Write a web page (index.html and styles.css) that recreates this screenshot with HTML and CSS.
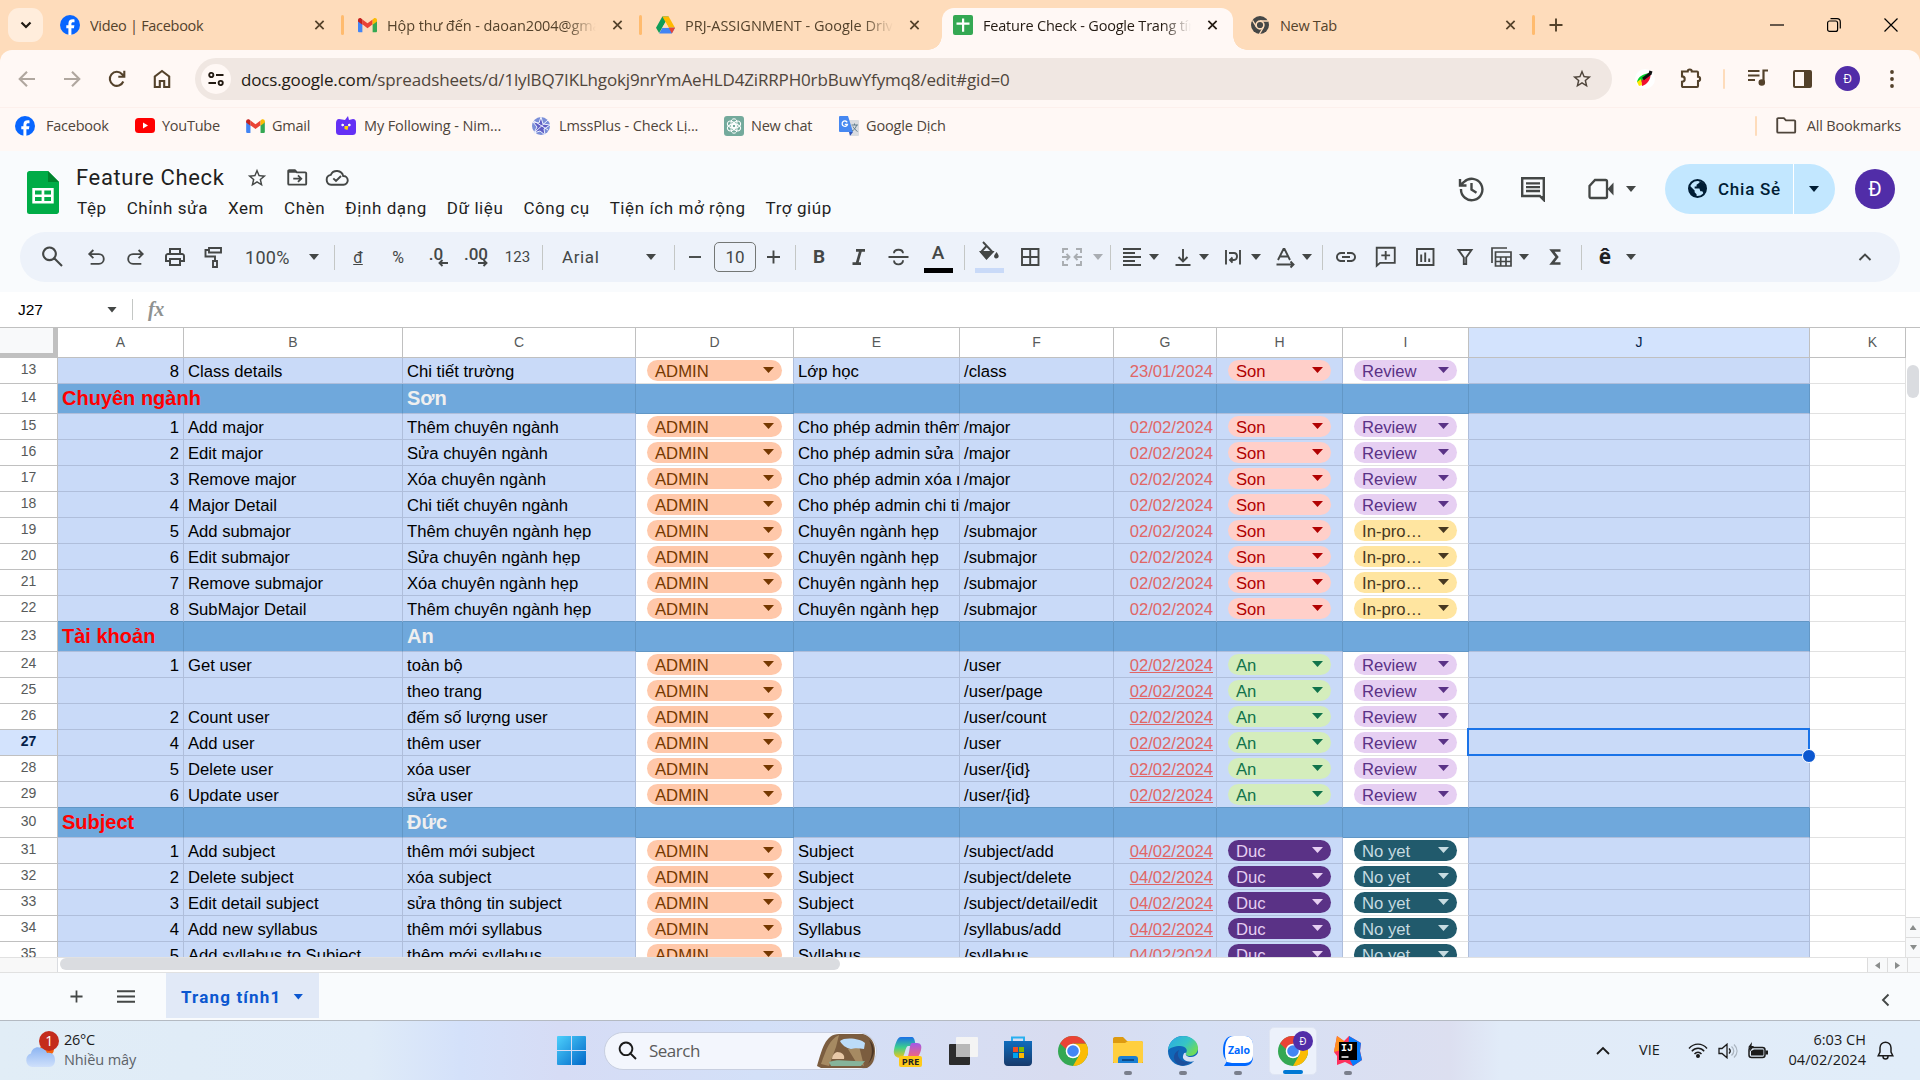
FILE: index.html
```html
<!DOCTYPE html>
<html lang="vi">
<head>
<meta charset="utf-8">
<title>Feature Check - Google Trang tính</title>
<link rel="stylesheet" href="styles.css">
</head>
<body>
<svg class="sprite" aria-hidden="true">
  <symbol id="x" viewBox="0 0 12 12"><path d="M1.500 1.500l9 9M10.500 1.500l-9 9" fill="none" stroke="currentColor" stroke-width="1.900"/></symbol>
  <symbol id="plus" viewBox="0 0 14 14"><path d="M7 0.500v13M.5 7h13" fill="none" stroke="currentColor" stroke-width="1.900"/></symbol>
  <symbol id="fb" viewBox="0 0 20 20"><circle cx="10" cy="10" r="10" fill="#0866ff"/><path d="M8.400 20v-6.700H6.300v-3h2.100V9c0-3.300 1.500-4.700 4.500-4.700.6 0 1.200.1 1.600.2v2.700h-1.300c-1.300 0-1.800.6-1.800 1.900v1.200h3l-.5 3h-2.500V20z" fill="#fff"/></symbol>
  <symbol id="gmail" viewBox="0 0 20 15"><path d="M0 2.500V14c0 .6.4 1 1 1h3.600V6.500z" fill="#4285f4"/><path d="M20 2.500V14c0 .6-.4 1-1 1h-3.600V6.500z" fill="#34a853"/><path d="M4.600 1.600v5.200l5.400 4 5.400-4V1.600L10 5.700z" fill="#ea4335"/><path d="M0 2.300v1.500l4.600 3.400V1.600L3.400.6C2 -.4 0 .5 0 2.300z" fill="#c5221f"/><path d="M20 2.300v1.500l-4.600 3.400V1.600l1.200-1C18 -.4 20 .5 20 2.300z" fill="#fbbc04"/></symbol>
  <symbol id="drive" viewBox="0 0 20 18"><path d="M6.700 0h6.600L3.300 17.500 0 12z" fill="#0f9d58"/><path d="M6.700 0h6.600L20 12h-6.600z" fill="#ffba00"/><path d="M6.700 12H20l-3.300 6H3.300z" fill="#4285f4"/><path d="M13.400 12H20l-3.300 6z" fill="#ea4335"/><path d="M10 6l3.400 6H6.600z" fill="#fedcbb"/></symbol>
  <symbol id="star" viewBox="0 0 24 24"><path fill="currentColor" d="M22 9.240l-7.190-.62L12 2 9.190 8.630 2 9.240l5.460 4.730L5.820 21 12 17.270 18.180 21l-1.630-7.030L22 9.240zM12 15.400l-3.760 2.270 1-4.280-3.320-2.880 4.380-.38L12 6.100l1.710 4.040 4.380.38-3.320 2.880 1 4.280L12 15.400z"/></symbol>
  <symbol id="chrome" viewBox="0 0 30 30"><circle cx="15" cy="15" r="15" fill="#34a853"/><path d="M15 7.500h13A15 15 0 0 1 15 30l6.500-11.300z" fill="#fbbc04"/><path d="M2 7.500l6.500 11.300L15 15z" fill="#34a853"/><path d="M2 7.500A15 15 0 0 1 28 7.500H15L8 13z" fill="#ea4335"/><circle cx="15" cy="15" r="7.300" fill="#fff"/><circle cx="15" cy="15" r="5.800" fill="#4285f4"/></symbol>
  <symbol id="fold" viewBox="0 0 22 18"><path d="M2.200 1.200h6l2.200 2.400h8.800c.6 0 1 .4 1 1v11c0 .6-.4 1-1 1h-17c-.6 0-1-.4-1-1V2.200c0-.6.400-1 1-1z" fill="none" stroke="currentColor" stroke-width="2"/></symbol>
</svg>

<header class="tabstrip">
  <button class="tab-search"><svg width="12" height="8" viewBox="0 0 12 8"><path d="M1.500 1.500L6 6l4.500-4.500" fill="none" stroke="#201a12" stroke-width="2.200"/></svg></button>
  <div class="tab"><svg class="fav"><use href="#fb"/></svg><span class="tab-title">Video | Facebook</span><svg class="close"><use href="#x"/></svg></div>
  <div class="tab"><svg class="fav gm"><use href="#gmail"/></svg><span class="tab-title fade mail">Hộp thư đến - daoan2004@gmail.com</span><svg class="close"><use href="#x"/></svg></div>
  <div class="tab last"><svg class="fav gm"><use href="#drive"/></svg><span class="tab-title fade drv">PRJ-ASSIGNMENT - Google Drive</span><svg class="close"><use href="#x"/></svg></div>
  <div class="tab active"><svg class="fav" viewBox="0 0 20 20"><rect width="20" height="20" rx="2" fill="#34a853"/><path d="M9 3.500h2.200v4h5.300v2.200h-5.300v7H9v-7H3.500V7.500H9z" fill="#fff"/></svg><span class="tab-title fade feat">Feature Check - Google Trang tính</span><svg class="close"><use href="#x"/></svg></div>
  <div class="tab new"><svg class="fav" viewBox="0 0 20 20"><circle cx="10" cy="10" r="9" fill="#454746"/><circle cx="10" cy="10" r="3.900" fill="#454746" stroke="#fedcbb" stroke-width="1.600"/><path d="M10 6h8M6.500 12L2.600 5.500M13.500 12l-4 7" stroke="#fedcbb" stroke-width="1.400"/></svg><span class="tab-title">New Tab</span><svg class="close"><use href="#x"/></svg></div>
  <svg class="new-tab"><use href="#plus"/></svg>
  <div class="window-buttons">
    <svg width="14" height="14" viewBox="0 0 14 14"><path d="M0 7h14" stroke="#000" stroke-width="1.200"/></svg>
    <svg width="14" height="14" viewBox="0 0 14 14"><rect x=".6" y="3" width="10" height="10.400" rx="2" fill="none" stroke="#000" stroke-width="1.200"/><path d="M3.500.7H10a3.300 3.300 0 0 1 3.300 3.300v6.500" fill="none" stroke="#000" stroke-width="1.200"/></svg>
    <svg width="14" height="14" viewBox="0 0 14 14"><path d="M.5.5l13 13M13.500.5l-13 13" stroke="#000" stroke-width="1.200"/></svg>
  </div>
</header>

<nav class="navbar">
  <svg class="nav dim" viewBox="0 0 20 20"><path d="M18 10H3M10 2.700L2.700 10l7.300 7.300" /></svg>
  <svg class="nav dim" viewBox="0 0 20 20"><path d="M2 10h15M10 2.700l7.300 7.300-7.300 7.300"/></svg>
  <svg class="nav" viewBox="0 0 20 20"><path d="M16.300 12.500a7 7 0 1 1-1.200-7.300l1.800 1.800M17.300 1.800v6h-6"/></svg>
  <svg class="nav" viewBox="0 0 20 20"><path d="M2.800 18V7.500L10 2l7.200 5.500V18h-5v-6H7.800v6z"/></svg>
  <div class="omnibox">
    <span class="site"><svg width="16" height="14" viewBox="0 0 16 14" fill="none" stroke="#231a12" stroke-width="1.900"><circle cx="3.300" cy="3" r="2.100"/><path d="M8 3h7.500M.5 11H8"/><circle cx="12.700" cy="11" r="2.100"/></svg></span>
    <span class="url"><b>docs.google.com</b>/spreadsheets/d/1lylBQ7IKLhgokj9nrYmAeHLD4ZiRRPH0rbBuwYfymq8/edit#gid=0</span>
    <svg class="bookmark-star"><use href="#star"/></svg>
  </div>
  <div class="extensions">
    <svg class="e1" width="20" height="20" viewBox="0 0 20 20"><circle cx="10" cy="10" r="10" fill="#fff"/><path d="M2 13C3 7 9 5 14 4L9 13z" fill="#00d02a"/><path d="M15 4c2 5-3 12-8 13L6 12z" fill="#f01030"/><path d="M2 13l4-3 1 6-3 1z" fill="#ffe600"/><path d="M8 10l8-6M14 3l3 1" stroke="#111" stroke-width="3"/></svg>
    <svg class="e2" width="22" height="22" viewBox="0 0 22 22"><path d="M2 4.500h5.700a2 2 0 0 1 4.100 0H17c.6 0 1 .4 1 1v4.300a2.100 2.100 0 0 1 0 4.200v5c0 .6-.4 1-1 1H3c-.6 0-1-.4-1-1v-4.200a2.500 2.500 0 0 0 0-5.400z" fill="none" stroke="#54422b" stroke-width="2.100"/></svg>
    <i class="divider"></i>
    <svg class="e3" width="20" height="18" viewBox="0 0 20 18" fill="none" stroke="#54422b" stroke-width="2.200"><path d="M0 2h11.500M0 6.500h11.500M0 11h7M15.500 13V1.500H20"/><circle cx="13.800" cy="13.500" r="2.200" fill="#54422b"/></svg>
    <svg class="e4" width="19" height="18" viewBox="0 0 19 18"><rect x="1" y="1" width="17" height="16" rx="1" fill="none" stroke="#54422b" stroke-width="2"/><path d="M11 1h7v16h-7z" fill="#54422b"/></svg>
    <span class="avatar small">Đ</span>
    <svg class="e5" width="4" height="18" viewBox="0 0 4 18" fill="#54422b"><circle cx="2" cy="2" r="1.900"/><circle cx="2" cy="9" r="1.900"/><circle cx="2" cy="16" r="1.900"/></svg>
  </div>
</nav>

<nav class="bookmarks">
  <a class="bm bm-fb"><svg width="20" height="20"><use href="#fb"/></svg>Facebook</a>
  <a class="bm bm-yt"><svg width="20" height="15" viewBox="0 0 20 15"><rect width="20" height="15" rx="3.500" fill="#f00"/><path d="M8 4.500l5 3-5 3z" fill="#fff"/></svg>YouTube</a>
  <a class="bm bm-gm"><svg width="19" height="14"><use href="#gmail"/></svg>Gmail</a>
  <a class="bm bm-nimo"><svg width="20" height="19" viewBox="0 0 20 19"><path d="M3 3l6 1 3-4 1 4 4-1c2 0 3 1 3 4v8c0 3-1 4-4 4H4c-3 0-4-1-4-4V7c0-2 1-4 3-4z" fill="#6430f5"/><path d="M6 8l2 1-2 1zM14 8l-2 1 2 1z" stroke="#fff" fill="#fff"/><path d="M8.500 10h4l-1 4-3-1z" fill="#ffd500"/></svg>My Following - Nim...</a>
  <a class="bm bm-lms"><svg width="20" height="20" viewBox="0 0 20 20"><circle cx="10" cy="10" r="9" fill="#7b8fd8"/><path d="M10 1l2 7 7 1-6 4 1 6-5-4-6 2 3-6-4-5 6 1z" fill="#5f5fc4"/><path d="M10 1l2 7 7 1-6 4 1 6-5-4-6 2 3-6-4-5 6 1zM3 5l14 9M17 4L4 16" fill="none" stroke="#eef3ff" stroke-width="1"/></svg>LmssPlus - Check Lị...</a>
  <a class="bm bm-gpt"><svg width="20" height="20" viewBox="0 0 20 20"><rect width="20" height="20" rx="3" fill="#74aa9c"/><g fill="none" stroke="#fff" stroke-width="1"><ellipse cx="10" cy="7.300" rx="3" ry="4.500"/><ellipse cx="10" cy="7.300" rx="3" ry="4.500" transform="rotate(60 10 10)"/><ellipse cx="10" cy="7.300" rx="3" ry="4.500" transform="rotate(120 10 10)"/><ellipse cx="10" cy="7.300" rx="3" ry="4.500" transform="rotate(180 10 10)"/><ellipse cx="10" cy="7.300" rx="3" ry="4.500" transform="rotate(240 10 10)"/><ellipse cx="10" cy="7.300" rx="3" ry="4.500" transform="rotate(300 10 10)"/></g></svg>New chat</a>
  <a class="bm bm-tr"><svg width="20" height="20" viewBox="0 0 20 20"><path d="M8 4h11a1 1 0 0 1 1 1v14a1 1 0 0 1-1 1h-7z" fill="#dadce0"/><path d="M1 0h8l5 16H1a1 1 0 0 1-1-1V1a1 1 0 0 1 1-1z" fill="#4688f1"/><path d="M10 16h4l-3 4z" fill="#3053b5"/><path d="M12.500 9H19M15.500 7.500V9M17.500 9c-.5 3-2.500 5-4.500 6M14 10.500c1 2 2.500 3.500 4.500 5" stroke="#607d8b" fill="none"/><path d="M8.200 6.300A2.700 2.700 0 1 0 8.500 8.300H5.800" stroke="#fff" stroke-width="1.300" fill="none"/></svg>Google Dịch</a>
  <i class="divider"></i>
  <a class="bm bm-all"><svg width="21" height="17"><use href="#fold"/></svg>All Bookmarks</a>
</nav>

<section class="docs-head">
  <svg class="logo" width="32" height="43" viewBox="0 0 32 43"><path d="M2.500 0H21l11 11v29.500c0 1.400-1.100 2.500-2.500 2.500h-27A2.500 2.500 0 0 1 0 40.500v-38C0 1.100 1.100 0 2.500 0z" fill="#00ac47"/><path d="M21 0l11 11H21z" fill="#00832d"/><path d="M5.300 17h21.400v15.500H5.300zm2.700 2.500v4h6.600v-4zm9.300 0v4H24v-4zM8 26v4h6.600v-4zm9.300 0v4H24v-4z" fill="#fff" fill-rule="evenodd"/></svg>
  <div class="doc-info">
    <div class="doc-title"><h1>Feature Check</h1>
      <svg class="t1" width="22" height="22"><use href="#star"/></svg>
      <svg class="t2" width="21" height="17" viewBox="0 0 22 18"><use href="#fold" width="22" height="18"/><path d="M1 1h8l2 3H1z" fill="#444746"/><path d="M6.500 10.200h8M11.500 6.700l3.500 3.500-3.500 3.500" fill="none" stroke="#444746" stroke-width="1.900"/></svg>
      <svg class="t3" width="24" height="17" viewBox="0 0 24 17"><path d="M18.500 15.800H6.200A5 5 0 0 1 5.800 5.900 6.600 6.600 0 0 1 18.200 7a4.400 4.400 0 0 1 .3 8.800z M8.300 9.300l2.700 2.700 5-5" fill="none" stroke="#444746" stroke-width="1.900"/></svg>
    </div>
    <div class="menus"><span>Tệp</span><span>Chỉnh sửa</span><span>Xem</span><span>Chèn</span><span>Định dạng</span><span>Dữ liệu</span><span>Công cụ</span><span>Tiện ích mở rộng</span><span>Trợ giúp</span></div>
  </div>
  <div class="doc-actions">
    <svg width="26" height="26" viewBox="0 0 26 26" fill="none" stroke="#444746" stroke-width="2.400"><path d="M3 13a10.700 10.700 0 1 0 3-7L2 9.500M2 3v6.500h6.500M13.500 7v6.500l5 3.200"/></svg>
    <svg class="a2" width="26" height="26" viewBox="0 0 26 26"><path d="M2.200 2.200h21.600V24l-4-4H2.200z" fill="none" stroke="#444746" stroke-width="2.400"/><path d="M21 20h4v5z" fill="#444746"/><path d="M6 7.300h14M6 11.200h14M6 15h14" stroke="#444746" stroke-width="2.300"/></svg>
    <svg class="a3" width="26" height="22" viewBox="0 0 26 22"><path d="M7 2h10.500c1 0 1.500.5 1.500 1.500v15c0 1-.5 1.500-1.500 1.500H3c-1 0-1.500-.5-1.500-1.500V8z" fill="none" stroke="#444746" stroke-width="2.300"/><path d="M19.500 11L25.500 4.500v13z" fill="#444746"/></svg>
    <i class="caret"></i>
    <div class="share"><span class="share-main"><svg width="19" height="19" viewBox="0 0 20 20"><circle cx="10" cy="10" r="9" fill="none" stroke="#001d35" stroke-width="2"/><path d="M2 7l5 5v2l2 2v3C3 18 1 13 2 7zM12 2v2l-3 2v2H7v2h5l1 3h2l2 3c3-4 3-11-5-14z" fill="#001d35"/></svg>Chia Sẻ</span><span class="share-more"><i class="caret"></i></span></div>
    <span class="avatar big">Đ</span>
  </div>
</section>

<div class="toolbar">
  <svg class="tool find" viewBox="0 0 40 24"><path d="M16.500 2.500a6.300 6.300 0 1 1-.01 0zM21 13l8 8"/></svg>
  <svg class="tool undo" viewBox="0 0 40 24"><path d="M15 19h8.500a5 5 0 0 0 0-10H14M17.800 4.800L13.600 9l4.200 4.200"/></svg>
  <svg class="tool" viewBox="0 0 40 24"><path d="M27 19h-8.500a5 5 0 0 1 0-10H28M24.200 4.800l4.200 4.200-4.200 4.200"/></svg>
  <svg class="tool fill" viewBox="-9 0 40 24"><path d="M19 8h-1V3H6v5H5c-1.660 0-3 1.340-3 3v6h4v4h12v-4h4v-6c0-1.660-1.340-3-3-3zM8 5h8v3H8V5zm8 12v2H8v-4h8v2zm2-2v-2H6v2H4v-4c0-.55.45-1 1-1h14c.55 0 1 .45 1 1v4h-2z"/></svg>
  <svg class="tool" viewBox="0 0 40 24"><path d="M15 3h12v4.500H15zM15 5h-3.500v6.500H21V16M19 16h4v6h-4z"/></svg>
  <span class="picker zoom"><span>100%</span><i class="caret"></i></span><i class="sep"></i>
  <span class="tool text dong">đ</span><span class="tool text">%</span>
  <span class="tool dec"><b>.0</b><svg width="10" height="8" viewBox="0 0 10 8"><path d="M10 4H1.500M4.500 1L1.500 4l3 3"/></svg></span>
  <span class="tool dec"><b>.00</b><svg width="10" height="8" viewBox="0 0 10 8"><path d="M0 4h8.500M5.500 1l3 3-3 3"/></svg></span>
  <span class="tool text num">123</span><i class="sep s2"></i>
  <span class="picker font"><span>Arial</span><i class="caret"></i></span><i class="sep"></i>
  <svg class="tool minus" viewBox="0 0 38 24"><path d="M14 12h12"/></svg>
  <span class="size-box">10</span>
  <svg class="tool plus" viewBox="0 0 34 24"><path d="M11 12h13M17.500 5.500v13"/></svg><i class="sep s2"></i>
  <span class="tool bold">B</span>
  <svg class="tool thick" viewBox="0 0 40 24"><path d="M18 5.300h9M14.500 18.700H23M22.700 5.300l-3.800 13.400"/></svg>
  <svg class="tool" viewBox="0 0 40 24"><path d="M10.500 12h20M25 8.200c-.3-4.800-9-4.500-9 0M16 15.500c.3 5.300 9.300 5 9-.2"/></svg>
  <span class="tool color"><span>A</span><i class="swatch"></i></span><i class="sep s3"></i>
  <span class="tool color bucket"><svg width="22" height="21" viewBox="0 0 22 21"><path d="M5 1l9.500 10-6 6L3 11l5.500-6" fill="none"/><path d="M3 11h11.500l-6 6.500z" fill="#444746"/><path d="M18.500 12.500c3 4-.5 4-.5 4s-2.500-.5.500-4z" fill="#444746"/></svg><i class="swatch blue"></i></span>
  <svg class="tool" viewBox="0 0 40 24"><path d="M13 4h16.500v16H13zM21.200 4v16M13 12h16.500"/></svg>
  <svg class="tool merge" viewBox="0 0 40 24"><path d="M16 4h-5v4M24 4h5v4M16 20h-5v-4M24 20h5v-4M10 12h7.500M14.500 8.800l3 3.200-3 3.200M30 12h-7.500M25.500 8.800l-3 3.200 3 3.200"/></svg><i class="caret in pale"></i><i class="sep s3"></i>
  <svg class="tool w32 al" viewBox="0 0 32 24"><path d="M7 4h18M7 8h12M7 12h18M7 16h12M7 20h18"/></svg><i class="caret in"></i>
  <svg class="tool w32" viewBox="0 0 32 24"><path d="M17 4v12.500M12.500 12l4.500 4.500 4.500-4.500M9.500 20h15"/></svg><i class="caret in"></i>
  <svg class="tool w32 wr" viewBox="0 0 34 24"><path d="M10 5v14.500M24 5v14.500M13 8h5c4 0 4 7 0 7h-4M16.500 12.500L14 15l2.500 2.700"/></svg><i class="caret in"></i>
  <svg class="tool w32 ro" viewBox="0 0 33 24"><path d="M10 15L15.500 4h1L22 15M12 11.500h8M8.500 19.500h17M22.500 16.500l3 3-3 3"/></svg><i class="caret in"></i><i class="sep s4"></i>
  <svg class="tool fill lnk" viewBox="-8 0 40 24"><path d="M3.900 12c0-1.710 1.390-3.100 3.100-3.100h4V7H7c-2.760 0-5 2.240-5 5s2.240 5 5 5h4v-1.900H7c-1.710 0-3.100-1.390-3.100-3.100zM8 13h8v-2H8v2zm9-6h-4v1.900h4c1.710 0 3.100 1.390 3.100 3.100s-1.390 3.100-3.100 3.100h-4V17h4c2.760 0 5-2.240 5-5s-2.240-5-5-5z"/></svg>
  <svg class="tool cm" viewBox="0 0 40 24"><path d="M11 2.500h18.500V18h-15L11 21zM20.200 5.800v9M15.700 10.300h9"/></svg>
  <svg class="tool" viewBox="0 0 40 24"><path d="M12 4h16.500v16H12zM16.200 9.500V17M20.200 7.500V17M24.200 13.500V17"/></svg>
  <svg class="tool" viewBox="0 0 40 24"><path d="M13.500 5h13l-5.300 7.500V19h-2.400v-6.500z"/></svg>
  <svg class="tool tbl" viewBox="0 0 33 24"><path d="M7 18V3h15M10.500 7H26v14H10.500zM10.500 12H26M10.500 16.500H26M15.700 12v9M21 12v9"/></svg><i class="caret in"></i>
  <svg class="tool thick sg" viewBox="0 0 40 24"><path d="M25.500 5.500H17l5 6.500-5 6.500h8.500"/></svg><i class="sep s3"></i>
  <span class="tool ee">ê</span><i class="caret in"></i>
  <svg class="tool collapse" viewBox="0 0 40 24"><path d="M14.500 15l5.500-5.500 5.500 5.500"/></svg>
</div>

<div class="formula"><span class="cell-name">J27</span><i class="caret"></i><i class="sep"></i><em>fx</em></div>

<main class="sheet">
<div class="grid">
<table>
<colgroup><col class="c0"><col class="cA"><col class="cB"><col class="cC"><col class="cD"><col class="cE"><col class="cF"><col class="cG"><col class="cH"><col class="cH"><col class="cJ"><col class="cK"></colgroup>
<thead><tr><th class="corner"><th>A<th>B<th>C<th>D<th>E<th>F<th>G<th>H<th>I<th class="sel">J<th class="wide">K</thead>
<tbody>
<tr><th>13<td>8<td>Class details<td>Chi tiết trường<td><b class="chip admin">ADMIN</b><td>Lớp học<td>/class<td>23/01/2024<td><b class="chip son">Son</b><td><b class="chip review">Review</b><td><td>
<tr class="band over"><th>14<td>Chuyên ngành<td><td>Sơn<td><td><td><td><td><td><td><td>
<tr><th>15<td>1<td>Add major<td>Thêm chuyên ngành<td><b class="chip admin">ADMIN</b><td>Cho phép admin thêm<td>/major<td>02/02/2024<td><b class="chip son">Son</b><td><b class="chip review">Review</b><td><td>
<tr><th>16<td>2<td>Edit major<td>Sửa chuyên ngành<td><b class="chip admin">ADMIN</b><td>Cho phép admin sửa major<td>/major<td>02/02/2024<td><b class="chip son">Son</b><td><b class="chip review">Review</b><td><td>
<tr><th>17<td>3<td>Remove major<td>Xóa chuyên ngành<td><b class="chip admin">ADMIN</b><td>Cho phép admin xóa major<td>/major<td>02/02/2024<td><b class="chip son">Son</b><td><b class="chip review">Review</b><td><td>
<tr><th>18<td>4<td>Major Detail<td>Chi tiết chuyên ngành<td><b class="chip admin">ADMIN</b><td>Cho phép admin chi tiết<td>/major<td>02/02/2024<td><b class="chip son">Son</b><td><b class="chip review">Review</b><td><td>
<tr><th>19<td>5<td>Add submajor<td>Thêm chuyên ngành hẹp<td><b class="chip admin">ADMIN</b><td>Chuyên ngành hẹp<td>/submajor<td>02/02/2024<td><b class="chip son">Son</b><td><b class="chip prog">In-pro…</b><td><td>
<tr><th>20<td>6<td>Edit submajor<td>Sửa chuyên ngành hẹp<td><b class="chip admin">ADMIN</b><td>Chuyên ngành hẹp<td>/submajor<td>02/02/2024<td><b class="chip son">Son</b><td><b class="chip prog">In-pro…</b><td><td>
<tr><th>21<td>7<td>Remove submajor<td>Xóa chuyên ngành hẹp<td><b class="chip admin">ADMIN</b><td>Chuyên ngành hẹp<td>/submajor<td>02/02/2024<td><b class="chip son">Son</b><td><b class="chip prog">In-pro…</b><td><td>
<tr class="pre-band"><th>22<td>8<td>SubMajor Detail<td>Thêm chuyên ngành hẹp<td><b class="chip admin">ADMIN</b><td>Chuyên ngành hẹp<td>/submajor<td>02/02/2024<td><b class="chip son">Son</b><td><b class="chip prog">In-pro…</b><td><td>
<tr class="band"><th>23<td>Tài khoản<td><td>An<td><td><td><td><td><td><td><td>
<tr class="u"><th>24<td>1<td>Get user<td>toàn bộ<td><b class="chip admin">ADMIN</b><td><td>/user<td>02/02/2024<td><b class="chip an">An</b><td><b class="chip review">Review</b><td><td>
<tr class="u"><th>25<td><td><td>theo trang<td><b class="chip admin">ADMIN</b><td><td>/user/page<td>02/02/2024<td><b class="chip an">An</b><td><b class="chip review">Review</b><td><td>
<tr class="u"><th>26<td>2<td>Count user<td>đếm số lượng user<td><b class="chip admin">ADMIN</b><td><td>/user/count<td>02/02/2024<td><b class="chip an">An</b><td><b class="chip review">Review</b><td><td>
<tr class="u"><th class="sel">27<td>4<td>Add user<td>thêm user<td><b class="chip admin">ADMIN</b><td><td>/user<td>02/02/2024<td><b class="chip an">An</b><td><b class="chip review">Review</b><td class="cursor"><td>
<tr class="u"><th>28<td>5<td>Delete user<td>xóa user<td><b class="chip admin">ADMIN</b><td><td>/user/{id}<td>02/02/2024<td><b class="chip an">An</b><td><b class="chip review">Review</b><td><td>
<tr class="u pre-band"><th>29<td>6<td>Update user<td>sửa user<td><b class="chip admin">ADMIN</b><td><td>/user/{id}<td>02/02/2024<td><b class="chip an">An</b><td><b class="chip review">Review</b><td><td>
<tr class="band"><th>30<td>Subject<td><td>Đức<td><td><td><td><td><td><td><td>
<tr class="u"><th>31<td>1<td>Add subject<td>thêm mới subject<td><b class="chip admin">ADMIN</b><td>Subject<td>/subject/add<td>04/02/2024<td><b class="chip duc">Duc</b><td><b class="chip no">No yet</b><td><td>
<tr class="u"><th>32<td>2<td>Delete subject<td>xóa subject<td><b class="chip admin">ADMIN</b><td>Subject<td>/subject/delete<td>04/02/2024<td><b class="chip duc">Duc</b><td><b class="chip no">No yet</b><td><td>
<tr class="u"><th>33<td>3<td>Edit detail subject<td>sửa thông tin subject<td><b class="chip admin">ADMIN</b><td>Subject<td>/subject/detail/edit<td>04/02/2024<td><b class="chip duc">Duc</b><td><b class="chip no">No yet</b><td><td>
<tr class="u"><th>34<td>4<td>Add new syllabus<td>thêm mới syllabus<td><b class="chip admin">ADMIN</b><td>Syllabus<td>/syllabus/add<td>04/02/2024<td><b class="chip duc">Duc</b><td><b class="chip no">No yet</b><td><td>
<tr class="u"><th>35<td>5<td>Add syllabus to Subject<td>thêm mới syllabus<td><b class="chip admin">ADMIN</b><td>Syllabus<td>/syllabus<td>04/02/2024<td><b class="chip duc">Duc</b><td><b class="chip no">No yet</b><td><td>
</tbody>
</table>
</div>
<div class="vscroll"><i class="thumb"></i><span class="up"></span><span class="down"></span></div>
</main>
<div class="hscroll"><i class="stub"></i><i class="thumb"></i><span class="left"></span><span class="right"></span><i class="end"></i></div>

<footer class="sheet-tabs">
  <svg class="add"><use href="#plus"/></svg>
  <svg class="all" width="18" height="13" viewBox="0 0 18 13"><path d="M0 1.200h18M0 6.500h18M0 11.800h18" stroke="#444746" stroke-width="1.900"/></svg>
  <span class="sheet-tab">Trang tính1<i class="caret"></i></span>
  <svg class="side" width="9" height="14" viewBox="0 0 9 14"><path d="M7.500 1.500L2 7l5.500 5.500" fill="none" stroke="#444746" stroke-width="1.900"/></svg>
</footer>

<footer class="taskbar">
  <div class="weather">
    <svg width="35" height="38" viewBox="0 0 35 38"><defs><linearGradient id="cl" x2="0" y2="1"><stop stop-color="#8db5f2"/><stop offset="1" stop-color="#cfe0fb"/></linearGradient></defs><circle cx="22" cy="18" r="7" fill="#f7630c"/><path d="M7 36a7 7 0 0 1-1-13.500C7 17 12 15 16 17c3 0 5 2 6 5 5-1 8 2 8 7 0 4-2 7-6 7z" fill="url(#cl)"/><circle cx="24" cy="10" r="10" fill="#c42b1c"/><text x="24" y="15" text-anchor="middle" fill="#fff" font-size="14" font-family="Open Sans, sans-serif">1</text></svg>
    <div class="temp"><div>26°C</div><div class="sub">Nhiều mây</div></div>
  </div>
  <div class="task-center">
    <svg class="start" width="29" height="29" viewBox="0 0 29 29"><defs><linearGradient id="w" x2="1" y2="1"><stop stop-color="#4dd0fc"/><stop offset="1" stop-color="#0067c8"/></linearGradient></defs><path d="M1 0h13v14H0V1a1 1 0 0 1 1-1zM15 0h13a1 1 0 0 1 1 1v13H15zM0 15h14v14H1a1 1 0 0 1-1-1zM15 15h14v13a1 1 0 0 1-1 1H15z" fill="url(#w)"/></svg>
    <div class="search-box"><svg class="mag" width="19" height="19" viewBox="0 0 19 19"><path d="M8 1.500a6.300 6.300 0 1 1-.01 0zM12.500 12.500l5.500 5.500" fill="none" stroke="#1b1b1b" stroke-width="1.900"/></svg><span>Search</span>
      <svg class="pic" width="58" height="34" viewBox="0 0 58 34"><path d="M0 32C5 16 8 0 22 0h24c8 2 12 9 12 17s-2 14-8 17H4z" fill="#7b5d3f"/><path d="M4 30C10 14 12 6 22 1l-3 12-7 19zM42 12l5 20-8-4-8-13z" fill="#a68a62"/><path d="M23 7c4-4 20-3 25 2l-1 6c-5-1-10-1-13 0-5-1-9-4-11-8z" fill="#bcdcf8"/><path d="M20 18c5 0 8 3 7 7H15c0-3 2-6 5-7z" fill="#e8c9a8"/><path d="M12 28c10-4 20 0 36-1l-4 5H14z" fill="#86b49a"/><path d="M52 6c4 7 4 16-1 24l3-4c5-8 3-16-2-20z" fill="#4a3524"/></svg></div>
    <div class="app"><svg width="32" height="32" viewBox="0 0 32 32"><defs><linearGradient id="cp" x2="0" y2="1"><stop stop-color="#1a6fe8"/><stop offset=".5" stop-color="#3ccf8d"/><stop offset="1" stop-color="#f5c518"/></linearGradient><linearGradient id="cq" x2="0" y2="1"><stop stop-color="#a259e8"/><stop offset="1" stop-color="#ff6a6a"/></linearGradient></defs><path d="M9 2h11c3 0 3 7 4 9h-8c-3 0-3 12-7 12-5 0-8-3-7-8S5 2 9 2z" fill="url(#cp)"/><path d="M20 8h5c4 0 5 3 4 7s-3 9-7 9h-8c4-2 3-16 6-16z" fill="url(#cq)"/><rect x="7" y="21" width="23" height="11" rx="2" fill="#ffca18"/><text x="18.500" y="30.200" text-anchor="middle" font-size="9.500" font-weight="700" font-family="Open Sans, sans-serif" fill="#222">PRE</text></svg></div>
    <div class="app"><svg width="30" height="30" viewBox="0 0 30 30"><rect x="1" y="8" width="21" height="21" rx="1" fill="#2c2c2c"/><rect x="8" y="1" width="22" height="20" rx="1" fill="#f4f4f4"/><path d="M8 8h14v13H8z" fill="#b8b8b8"/></svg></div>
    <div class="app"><svg width="30" height="30" viewBox="0 0 30 30"><defs><linearGradient id="st" x2="0" y2="1"><stop stop-color="#0f6cbd"/><stop offset="1" stop-color="#173a6b"/></linearGradient></defs><path d="M9 6V1.500h12V6" fill="none" stroke="#2ab0f0" stroke-width="2"/><path d="M1 5h28v21c0 2-1 4-4 4H5c-3 0-4-2-4-4z" fill="url(#st)"/><path d="M10 11h5v5h-5z" fill="#f25022"/><path d="M16 11h5v5h-5z" fill="#7fba00"/><path d="M10 17h5v5h-5z" fill="#00a4ef"/><path d="M16 17h5v5h-5z" fill="#ffb900"/></svg></div>
    <div class="app"><svg width="30" height="30"><use href="#chrome"/></svg></div>
    <div class="app run"><svg width="30" height="28" viewBox="0 0 30 28"><path d="M0 2c0-1 .5-2 2-2h8l4 4h14c1.500 0 2 1 2 2v20H0z" fill="#dd9a10"/><path d="M0 6h12l3-2h13c1.500 0 2 1 2 2v18c0 1.500-.5 2-2 2H2c-1.500 0-2-.5-2-2z" fill="#ffcf3f"/><path d="M5 26v-4c0-2 1-3 3-3h14c2 0 3 1 3 3v4z" fill="#1a7fd4"/><path d="M9 23h12" stroke="#0b4c8c" stroke-width="2"/></svg></div>
    <div class="app run"><svg width="30" height="30" viewBox="0 0 30 30"><defs><linearGradient id="ed" x1="0" y1="0" x2="1" y2=".6"><stop stop-color="#2aa8e8"/><stop offset=".6" stop-color="#36c5c5"/><stop offset="1" stop-color="#6ddb5a"/></linearGradient></defs><circle cx="15" cy="15" r="15" fill="#1067b8"/><path d="M0 14C1 5 8 0 15 0c9 0 15 6 15 12 0 5-4 8-8 8-3 0-5-1-4-3 2-3 0-7-6-7-5 0-10 2-12 4z" fill="url(#ed)"/><path d="M11 14c-4 7 3 14 12 11-3 3-6 5-10 4.500C4 27 4 17 11 14z" fill="#1b4f9c"/><path d="M18 17c-1 2 1 4 5 4 3 0 5-1.500 7-4v6c-1 1-2 2-3 2-7 2-13-1-12-5 .5-3 2-4 3-3z" fill="#d8e0f4"/></svg></div>
    <div class="app run"><svg width="30" height="30" viewBox="0 0 30 30"><path d="M10 0h12c5 0 8 4 8 9v12c0 5-3 9-8 9H1l3-5C1 22 0 19 0 15 0 6 3 0 10 0z" fill="#0068ff"/><path d="M11 0h11c5 0 8 4 8 9v10c0 5-3 8-8 8H9l-5-1C2 22 2 19 2 14 2 6 5 0 11 0z" fill="#fff"/><text x="16" y="18" text-anchor="middle" font-size="10.500" font-weight="700" font-family="Open Sans, sans-serif" fill="#0068ff">Zalo</text></svg></div>
    <div class="app current"><svg width="30" height="30"><use href="#chrome"/></svg><span class="avatar mini">Đ</span></div>
    <div class="app run"><svg width="28" height="30" viewBox="0 0 28 30"><path d="M3 0l7 5 5-5 12 7-1 8 2 9-9 6-8-4-8 3V20l-3-4z" fill="#fe315d"/><path d="M15 0l12 7-1 8 2 9-9 6-5-10z" fill="#087cfa"/><path d="M3 0l7 5-3 9-7 2z" fill="#ff8f1f"/><path d="M5 6h18v18H5z" fill="#000"/><path d="M7.500 21h7" stroke="#fff" stroke-width="1.500"/><text x="7" y="15" font-size="10" font-weight="700" font-family="Liberation Mono, monospace" fill="#fff">IJ</text></svg></div>
  </div>
  <div class="tray">
    <svg class="chev" width="14" height="9" viewBox="0 0 14 9"><path d="M1 8l6-6 6 6" fill="none" stroke="#1b1b1b" stroke-width="1.800"/></svg>
    <span class="lang">VIE</span>
    <svg class="wifi" width="20" height="15" viewBox="0 0 20 15" fill="none" stroke="#1b1b1b" stroke-width="1.400"><path d="M1 5.500C6-.3 14-.3 19 5.500M3.800 8.200c3.500-4 9-4 12.400 0M6.500 11c2-2.400 5-2.400 7 0"/><circle cx="10" cy="13" r="1.300" fill="#1b1b1b"/></svg>
    <svg class="vol" width="20" height="16" viewBox="0 0 20 16" fill="none" stroke="#1b1b1b" stroke-width="1.300"><path d="M1 5.500h3L9 1.200v13.600L4 10.500H1zM11 5.500c1.500 1.500 1.500 3.500 0 5"/><path d="M13.500 3.500c3 2.500 3 6.500 0 9M16 1.500c4 4 4 9 0 13" stroke="#aab4bf"/></svg>
    <svg class="bat" width="20" height="17" viewBox="0 0 20 17"><rect x="1" y="5.500" width="16" height="10" rx="2.500" fill="none" stroke="#1b1b1b" stroke-width="1.500"/><path d="M3 13.500V9l3-1.500h9.500v6zM17.500 8.500H20v4h-2.500zM4 0L0 5.500h2.500L1.500 10 6 4H3.500z" fill="#1b1b1b"/></svg>
    <div class="clock"><div>6:03 CH</div><div>04/02/2024</div></div>
    <svg class="bell" width="17" height="19" viewBox="0 0 17 19" fill="none" stroke="#1b1b1b" stroke-width="1.500"><path d="M8.500 1.200a5.500 5.500 0 0 0-5.500 5.500V11l-1.800 3.800h14.600L14 11V6.700a5.500 5.500 0 0 0-5.500-5.500zM6 15.500a2.500 2.500 0 0 0 5 0"/></svg>
  </div>
</footer>
</body>
</html>
```
FILE: styles.css
```css
* { box-sizing: border-box; }
body {
  margin: 0;
  width: 1920px;
  height: 1080px;
  overflow: hidden;
  display: flex;
  flex-direction: column;
  background: #f9fbfd;
  font-family: "Open Sans", "Noto Sans", sans-serif;
  font-size: 14.5px;
}
svg { display: block; flex: none; }
.sprite { width: 0; height: 0; position: absolute; }
.caret {
  flex: none;
  width: 10px;
  height: 6px;
  background: #444746;
  clip-path: polygon(0 0, 100% 0, 50% 100%);
}
.avatar {
  display: flex;
  flex: none;
  align-items: center;
  justify-content: center;
  border-radius: 50%;
  background: #512da8;
  color: #fff;
}

/* Tab strip */
.tabstrip {
  height: 50px;
  flex: none;
  display: flex;
  align-items: center;
  background: #fedcbb;
  color: #54422b;
  padding-left: 8px;
}
.tab-search {
  width: 35px;
  height: 34px;
  margin-right: 3px;
  padding: 0;
  border: 0;
  border-radius: 11px;
  background: #ffeddc;
  display: flex;
  align-items: center;
  justify-content: center;
}
.tab {
  width: 298px;
  height: 50px;
  padding: 0 17px 0 14px;
  display: flex;
  align-items: center;
  position: relative;
}
.tab::after {
  content: "";
  position: absolute;
  right: 0;
  top: 15px;
  width: 3px;
  height: 20px;
  border-radius: 2px;
  background: #ffbb6e;
}
.tab.last { width: 297px; }
.tab.last::after, .tab.active::after { display: none; }
.fav { width: 20px; height: 20px; margin-right: 10px; }
.fav.gm { width: 19px; height: 18px; }
.tab-title {
  flex: 1;
  overflow: hidden;
  white-space: nowrap;
  letter-spacing: -0.3px;
  margin-right: 16px;
}
.tab-title.fade { mask-image: linear-gradient(90deg, #000 86%, transparent); }
.tab-title.mail { letter-spacing: -0.08px; }
.tab-title.drv { letter-spacing: 0; }
.tab-title.feat { letter-spacing: -0.2px; }
.close { width: 11px; height: 12px; margin-right: 2px; }
.tab.active {
  width: 291px;
  height: 42px;
  align-self: flex-end;
  margin-left: 3px;
  padding: 0 13px 8px 11px;
  border-radius: 12px 12px 0 0;
  background: #fff8f5;
  color: #231a12;
}
.tab.active::before {
  content: "";
  position: absolute;
  left: -14px;
  right: -14px;
  bottom: 0;
  height: 14px;
  background:
    radial-gradient(circle at 0 0, transparent 13.5px, #fff8f5 14px) left / 14px 14px no-repeat,
    radial-gradient(circle at 100% 0, transparent 13.5px, #fff8f5 14px) right / 14px 14px no-repeat;
}
.tab.new { width: 302px; padding-left: 17px; }
.new-tab { width: 14px; height: 14px; margin-left: 14px; }
.window-buttons { display: flex; gap: 43px; margin-left: auto; padding-right: 22px; }

/* Navigation */
.navbar {
  height: 58px;
  flex: none;
  display: flex;
  align-items: center;
  background: #fff8f5;
  border-bottom: 1px solid #fdf0ec;
  border-radius: 12px 12px 0 0;
  padding-left: 17px;
  box-shadow: 0 -12px 0 #fedcbb;
  clip-path: inset(0 0 0 0);
}
.nav {
  width: 20px;
  height: 22px;
  margin-right: 25px;
  fill: none;
  stroke: #54422b;
  stroke-width: 2.1;
}
.nav.dim { stroke: #b0a79f; }
.omnibox {
  width: 1417px;
  height: 42px;
  margin-left: -2px;
  border-radius: 21px;
  background: #f0e7e2;
  display: flex;
  align-items: center;
  padding: 0 19px 0 6px;
  color: #4f453b;
}
.site {
  width: 30px;
  height: 30px;
  border-radius: 50%;
  background: #fff8f5;
  display: flex;
  align-items: center;
  justify-content: center;
}
.url { flex: 1; margin-left: 10px; font-size: 17px; letter-spacing: -0.16px; padding-top: 1px; }
.url b { font-weight: 400; color: #231a12; }
.bookmark-star { width: 22px; height: 22px; }
.extensions { display: flex; align-items: center; margin-left: 23px; }
.extensions .e2 { margin: 0 0 2px 25px; }
.extensions .divider { margin-left: 21px; }
.extensions .e3 { margin: 0 0 2px 23px; }
.extensions .e4 { margin-left: 25px; }
.extensions .small { margin-left: 23px; }
.extensions .e5 { margin-left: 30px; }
.divider { width: 2px; height: 20px; border-radius: 1px; background: #fedcbb; flex: none; }
.avatar.small { width: 25px; height: 25px; font-size: 12px; }

.bookmarks {
  height: 43px;
  flex: none;
  display: flex;
  align-items: center;
  padding: 0 19px 8px 15px;
  background: #fff8f5;
  color: #4f453b;
  letter-spacing: -0.25px;
}
.bm { display: flex; align-items: center; gap: 8px; white-space: nowrap; }
.bm-fb { width: 120px; gap: 11px; }
.bm-yt { width: 111px; gap: 7px; }
.bm-gm { width: 90px; gap: 7px; }
.bm-nimo { width: 195px; letter-spacing: -0.12px; }
.bm-lms { width: 193px; letter-spacing: -0.14px; }
.bm-gpt { width: 115px; gap: 7px; }
.bm-tr { gap: 7px; letter-spacing: -0.15px; }
.bookmarks .divider { margin-left: auto; margin-right: 19px; }
.bm-all { gap: 10px; letter-spacing: -0.18px; }

/* Document header */
.docs-head {
  height: 81px;
  flex: none;
  display: flex;
  padding-left: 27px;
  font-family: Roboto, "Noto Sans", sans-serif;
  color: #1f1f1f;
}
.logo { margin-top: 20px; }
.doc-info { margin-left: 17px; padding-top: 10px; }
.doc-title { display: flex; align-items: center; height: 32px; color: #444746; }
.doc-title h1 {
  width: 147px;
  margin: 0;
  font-size: 22px;
  font-weight: 400;
  letter-spacing: 0.65px;
  white-space: nowrap;
  color: #1f1f1f;
}
.t1 { margin: 1px 0 0 23px; }
.t2 { margin: 1px 0 0 19px; }
.t3 { margin: 1px 0 0 17px; }
.menus { display: flex; gap: 20px; padding: 4px 0 0 1px; font-size: 17px; letter-spacing: 0.58px; line-height: 23px; white-space: nowrap; }
.doc-actions { display: flex; align-items: center; height: 50px; margin: 13px 25px 0 auto; }
.a2 { margin-left: 36px; }
.a3 { margin-left: 42px; }
.doc-actions > .caret { margin-left: 12px; }
.share {
  width: 170px;
  height: 50px;
  margin-left: 29px;
  border-radius: 25px;
  background: #c2e7ff;
  display: flex;
  align-items: center;
  color: #001d35;
}
.share-main { width: 128px; display: flex; align-items: center; gap: 11px; padding-left: 23px; padding-bottom: 1px; font-size: 17px; font-weight: 500; letter-spacing: 0.75px; white-space: nowrap; }
.share-more { height: 50px; flex: 1; border-left: 1px solid #fff; display: flex; align-items: center; padding-left: 15px; }
.share .caret { background: #001d35; }
.avatar.big { width: 40px; height: 40px; margin-left: 20px; font-size: 20px; }

/* Toolbar */
.toolbar {
  height: 50px;
  flex: none;
  margin: 0 20px 10px;
  padding-left: 13px;
  border-radius: 25px;
  background: #edf2fa;
  display: flex;
  align-items: center;
  font-family: Roboto, sans-serif;
  color: #444746;
}
.tool { width: 40px; height: 24px; flex: none; fill: none; stroke: #444746; stroke-width: 1.9; }
span.tool { stroke-width: 0; }
span.tool svg { stroke-width: 1.9; }
svg.tool.fill { fill: #444746; stroke: none; }
svg.tool.thick { stroke-width: 2.7; }
.find { margin-right: 3px; stroke-width: 2.1; }
.undo, .undo + .tool { width: 39px; }
.picker { display: flex; align-items: center; font-size: 18px; letter-spacing: 0.3px; }
.picker span { flex: 1; }
.picker.zoom { width: 100px; padding: 0 15px 0 11px; }
.picker.font { width: 131px; padding: 0 18px 0 19px; font-size: 17px; letter-spacing: 0.6px; }
.sep { width: 1px; height: 25px; flex: none; background: #c4c7c5; }
.sep.s2 { margin-left: 5px; }
.sep.s3 { margin-left: 6px; }
.sep.s4 { margin-left: 9px; }
.tool.text { display: flex; align-items: center; justify-content: center; font-size: 16px; }
.dong { margin-left: 3px; text-decoration: underline; }
.tool.num { font-size: 15px; width: 39px; }
.tool.dec { display: flex; flex-direction: column; align-items: center; justify-content: center; height: 28px; padding-right: 4px; }
.dec b { font-size: 17px; font-weight: 500; line-height: 12px; }
.dec svg { margin: -1px -14px 0 0; }
.tool.minus { width: 38px; }
.tool.plus { width: 34px; }
.size-box { width: 42px; height: 30px; margin-left: 1px; border: 1px solid #747775; border-radius: 5px; text-align: center; font-size: 17px; line-height: 28px; }
.tool.bold { margin-left: 2px; padding-left: 2px; text-align: center; font-size: 19px; font-weight: 700; line-height: 24px; }
.tool.color { height: 34px; display: flex; flex-direction: column; align-items: center; justify-content: space-between; font-size: 19px; font-weight: 500; line-height: 25px; }
.swatch { width: 29px; height: 5px; background: #000; margin-bottom: 1px; }
.swatch.blue { background: #c9daf8; }
.bucket { margin-left: 4px; }
.bucket svg { margin-top: 1px; }
.merge { margin-left: 3px; opacity: 0.4; }
.caret.in { margin: 0 1px; }
.pale { opacity: 0.4; }
.tool.w32 { width: 32px; margin-left: 6px; }
.tool.w32.al { margin-left: 5px; }
.tool.w32.wr { width: 34px; }
.tool.w32.ro { width: 33px; }
.lnk { margin-left: 3px; }
.tool.cm { width: 39px; }
.tool.tbl { width: 33px; stroke-width: 1.7; }
.sg { margin-left: 5px; }
.tool.ee { margin-left: 3px; text-align: center; font: 700 21px/22px "Open Sans", sans-serif; color: #202124; }
.tool.collapse { margin: 0 15px 0 auto; }

/* Formula bar */
.formula { height: 35px; flex: none; display: flex; align-items: center; padding: 0 0 0 18px; background: #fff; font-family: "Liberation Sans", sans-serif; }
.cell-name { width: 89px; font-size: 15.5px; letter-spacing: -0.1px; }
.formula .sep { height: 21px; margin: 0 14px 0 15px; }
.formula em { font: italic 700 20px "Liberation Serif", serif; color: #8f9291; letter-spacing: -0.5px; padding-left: 1px; }

/* Grid */
.sheet { height: 631px; flex: none; display: flex; background: #fff; border-top: 1px solid #c0c0c0; border-bottom: 1px solid #e1e1e1; overflow: hidden; font-family: "Liberation Sans", Arial, sans-serif; }
.grid { width: 1906px; overflow: hidden; }
table { width: 1906px; table-layout: fixed; border-collapse: separate; border-spacing: 0; }
.c0 { width: 58px; } .cA { width: 126px; } .cB { width: 219px; } .cC { width: 233px; } .cD { width: 158px; } .cE { width: 166px; }
.cF { width: 154px; } .cG { width: 103px; } .cH { width: 126px; } .cJ { width: 341px; } .cK { width: 96px; }
tr { height: 26px; }
th { padding: 0; border: solid #c0c0c0; border-width: 0 1px 1px 0; font-size: 14px; font-weight: 400; color: #575a5a; background: #fff; line-height: 16px; }
thead tr { height: 30px; }
thead th { padding-bottom: 2px; }
thead th.wide { padding-left: 30px; }
tbody th { padding-bottom: 3px; }
thead .corner { background: #f8f9fa; border-width: 0 5px 5px 0; }
th.sel { background: #d3e3fd; color: #041e49; }
tbody th.sel { font-weight: 700; }
td {
  padding: 2px 4px 0;
  height: 26px;
  border: solid #afbedb;
  border-width: 0 1px 1px 0;
  background: #c9daf8;
  font-size: 16.67px;
  line-height: 19px;
  white-space: nowrap;
  overflow: hidden;
}
td:nth-child(2) { text-align: right; padding-right: 4px; }
td:nth-child(8) { text-align: right; padding-right: 3px; color: #e06666; }
td:nth-child(5), td:nth-child(10) { background: #fff; border-bottom-color: #e1e1e1; padding: 0 11px; }
td:nth-child(9) { padding: 0 11px; }
.u td:nth-child(8) { text-decoration: underline; }
td:nth-child(12) { background: #fff; border-color: #e1e1e1; }
.band td:nth-child(n) { height: 30px; padding: 0 4px; border-right-color: #6297c6; background: #6fa8dc; color: #efefef; font-size: 20px; font-weight: 700; text-align: left; letter-spacing: 0; overflow: visible; }
.band td:nth-child(2) { color: #f00; }
.band td:nth-child(5), .band td:nth-child(10), .pre-band td:nth-child(-n+11) { border-bottom-color: #6297c6; }
.band td:nth-child(12) { background: #fff; border-color: #e1e1e1; }
.band.over td:nth-child(2) { border-right-color: #6fa8dc; position: relative; z-index: 1; }
.cursor { position: relative; overflow: visible; }
.cursor::before { content: ""; position: absolute; inset: -2px -1px -1px -2px; border: 2px solid #1a73e8; }
.cursor::after { content: ""; position: absolute; right: -7px; bottom: -8px; width: 12px; height: 12px; border: 1px solid #fff; border-radius: 50%; background: #0b57d0; }

.chip {
  display: flex;
  align-items: center;
  justify-content: space-between;
  height: 21px;
  padding: 2px 8px 0 8px;
  border-radius: 10.5px;
  font-weight: 400;
}
.chip::after { content: ""; width: 11px; height: 6px; margin-bottom: 3px; background: currentColor; clip-path: polygon(0 0, 100% 0, 50% 100%); }
.admin { background: #ffc8aa; color: #753800; }
.son { background: #ffcfc9; color: #b10202; }
.review { background: #e6cff2; color: #5a3286; }
.prog { background: #ffe5a0; color: #473821; }
.an { background: #d4edbc; color: #11734b; }
.duc { background: #5a3286; color: #e6cff2; }
.no { background: #215a6c; color: #c6dbe1; }

.vscroll { flex: 1; display: flex; flex-direction: column; align-items: center; background: #fff; }
.vscroll .thumb { width: 12px; height: 33px; margin: 37px 0 auto; border-radius: 6px; background: #dadce0; }
.vscroll span, .hscroll span { display: flex; align-items: center; justify-content: center; background: #f8f9fa; }
.vscroll span { width: 14px; height: 20px; border-top: 1px solid #dcdcdc; }
.up::after, .down::after, .left::after, .right::after { content: ""; width: 7px; height: 5px; background: #8a8d8c; clip-path: polygon(50% 0, 100% 100%, 0 100%); }
.down::after { transform: rotate(180deg); }
.hscroll { height: 15px; flex: none; display: flex; align-items: flex-start; background: #fff; border-bottom: 1px solid #e1e1e1; }
.hscroll .stub { width: 58px; height: 14px; margin-right: 2px; background: #f8f8f8; border-right: 1px solid #dadce0; }
.hscroll .thumb { width: 780px; height: 12px; border-radius: 6px; background: #dadce0; margin-right: auto; }
.hscroll span { width: 20px; height: 14px; border-left: 1px solid #dcdcdc; }
.left::after { transform: rotate(-90deg); }
.right::after { transform: rotate(90deg); }
.hscroll .end { width: 13px; height: 14px; background: #f8f9fa; border-left: 1px solid #dcdcdc; }

/* Sheet tabs */
.sheet-tabs { height: 47px; flex: none; display: flex; align-items: center; padding-left: 70px; font-family: Roboto, sans-serif; color: #444746; }
.add { width: 13px; height: 13px; }
.all { margin-left: 34px; }
.sheet-tab { width: 153px; height: 45px; margin: 0 0 2px 31px; padding: 2px 0 0 15px; display: flex; align-items: center; gap: 12px; background: #e1e9f7; color: #0b57d0; font-size: 17px; font-weight: 700; letter-spacing: 1.15px; white-space: nowrap; }
.sheet-tab .caret { background: #0b57d0; }
.side { margin: 6px 30px 0 auto; }

/* Taskbar */
.taskbar {
  height: 60px;
  flex: none;
  display: flex;
  align-items: center;
  border-top: 1px solid #b4bac2;
  background: linear-gradient(90deg, #e1edf6 0, #dfebf8 370px, #d4e1fa 460px, #d6dcf5 560px, #d3e0f8 760px, #d8dcf0 1060px, #d6e0f5 1200px, #dcdff0 1450px, #e1ebf8 1500px, #e1edf9 100%);
  color: #1b1b1b;
}
.weather { width: 557px; display: flex; align-items: center; padding-left: 25px; gap: 4px; line-height: 20px; letter-spacing: -0.3px; }
.weather svg { margin-top: -2px; }
.temp { margin-top: -2px; }
.weather .sub { color: #5c6268; letter-spacing: -0.1px; }
.task-center { display: flex; align-items: center; height: 59px; }
.search-box { width: 273px; height: 38px; margin: 0 7px 0 18px; border: 1px solid #c8cfe0; border-radius: 19px; background: #f3f6fd; display: flex; align-items: center; padding: 0 1px 0 13px; font-size: 17px; letter-spacing: -0.5px; color: #5b5b5b; }
.search-box span { flex: 1; margin-left: 12px; }
.app { width: 48px; height: 48px; margin-right: 7px; display: flex; align-items: center; justify-content: center; position: relative; }
.run::after, .current::after { content: ""; position: absolute; left: 20px; bottom: 0; width: 8px; height: 4px; border-radius: 2px; background: #7a7f8c; }
.current { background: #ecf1fb; border: 1px solid #dfe5f3; border-radius: 5px; }
.current::after { left: 13px; width: 20px; background: #0078d4; }
.avatar.mini { position: absolute; left: 23px; top: 3px; width: 20px; height: 20px; font-size: 10px; }
.tray { display: flex; align-items: center; margin-left: auto; padding-right: 26px; }
.lang { margin: -2px 0 0 29px; width: 49px; letter-spacing: 0; }
.vol { margin-left: 10px; }
.bat { margin-left: 10px; }
.clock { width: 98px; margin-top: -2px; text-align: right; line-height: 20px; letter-spacing: 0.05px; }
.bell { margin-left: 11px; }
```
